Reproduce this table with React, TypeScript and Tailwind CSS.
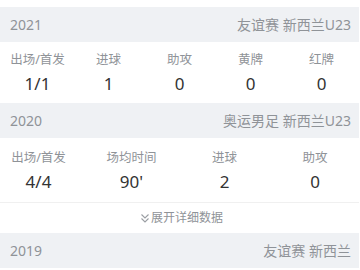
const font = { fontFamily: '"Noto Sans", "Noto Sans CJK SC", sans-serif' };

type Stat = { label: string; value: string };

type Season = {
  year: string;
  comp: string;
  stats: Stat[];
  expandable?: boolean;
};

const seasons: Season[] = [
  {
    year: "2021",
    comp: "友谊赛 新西兰U23",
    stats: [
      { label: "出场/首发", value: "1/1" },
      { label: "进球", value: "1" },
      { label: "助攻", value: "0" },
      { label: "黄牌", value: "0" },
      { label: "红牌", value: "0" },
    ],
  },
  {
    year: "2020",
    comp: "奥运男足 新西兰U23",
    stats: [
      { label: "出场/首发", value: "4/4" },
      { label: "场均时间", value: "90'" },
      { label: "进球", value: "2" },
      { label: "助攻", value: "0" },
    ],
    expandable: true,
  },
  {
    year: "2019",
    comp: "友谊赛 新西兰",
    stats: [],
  },
];

function SeasonHeader({ year, comp }: { year: string; comp: string }) {
  return (
    <div className="flex h-[35px] items-center justify-between bg-[#eff1f4] pl-[10px] pr-[8px] text-[14px] text-[#8f9398]">
      <span>{year}</span>
      <span>{comp}</span>
    </div>
  );
}

function StatCell({ stat, className = "" }: { stat: Stat; className?: string }) {
  return (
    <div className={"flex flex-col items-center " + className}>
      <span className="text-[12.5px] leading-[16px] text-[#8f9398]">{stat.label}</span>
      <span className="mt-[5px] text-[17px] leading-[22px] text-[#333]">{stat.value}</span>
    </div>
  );
}

function ChevronsDown() {
  return (
    <svg width="10" height="11" viewBox="0 0 10 11" fill="none" stroke="#9a9ea3" strokeWidth="1.1">
      <path d="M1.5 1.5 L5 5 L8.5 1.5" />
      <path d="M1.5 5.5 L5 9 L8.5 5.5" />
    </svg>
  );
}

export default function App() {
  return (
    <div className="h-[270px] w-[359px] overflow-hidden bg-white pt-[7px]" style={font}>
      {seasons.map((s) => (
        <div key={s.year}>
          <SeasonHeader year={s.year} comp={s.comp} />
          {s.stats.length === 5 && (
            <div className="grid h-[61px] grid-cols-5 items-center px-[2px] pt-[1px]">
              {s.stats.map((st) => (
                <StatCell key={st.label} stat={st} />
              ))}
            </div>
          )}
          {s.stats.length === 4 && (
            <div className="grid h-[65px] grid-cols-[85px_93px_93px_88px] items-center border-b border-[#f0f0f0] pt-[3px]">
              {s.stats.map((st, i) => (
                <StatCell key={st.label} stat={st} className={i === 0 ? "pr-[8px]" : ""} />
              ))}
            </div>
          )}
          {s.expandable && (
            <div className="flex h-[30px] items-center justify-center gap-[1px] pl-[4px] text-[12px] text-[#8f9398]">
              <ChevronsDown />
              <span>展开详细数据</span>
            </div>
          )}
        </div>
      ))}
    </div>
  );
}
